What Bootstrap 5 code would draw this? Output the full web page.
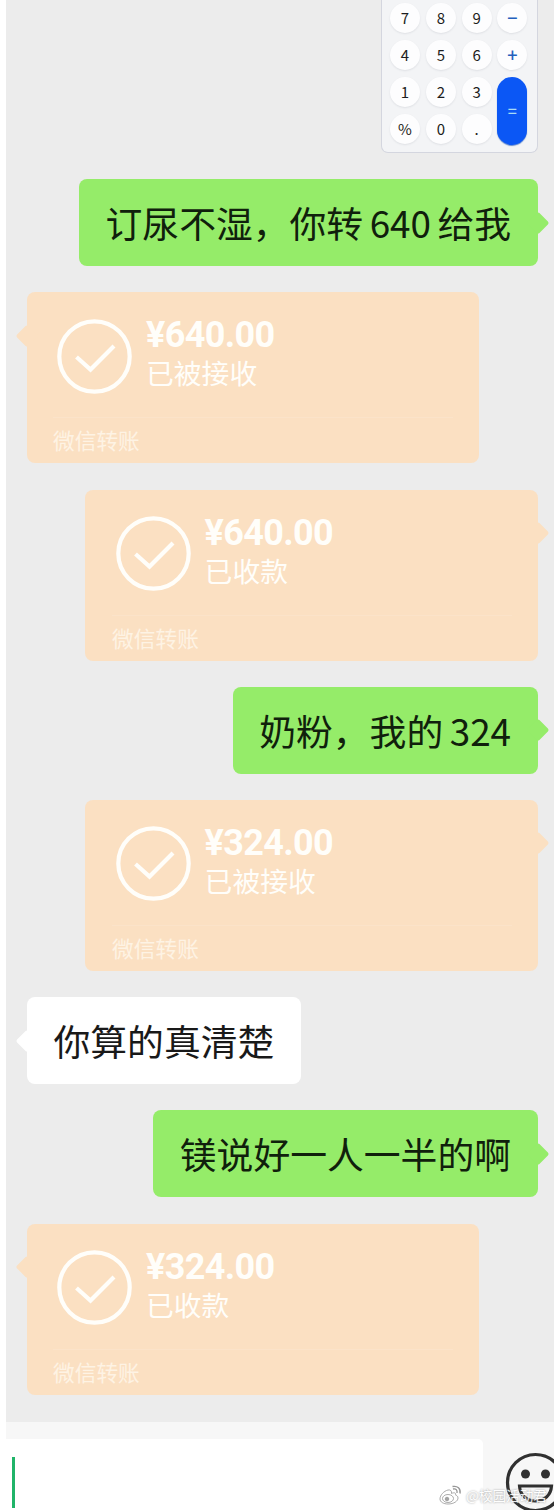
<!DOCTYPE html>
<html lang="zh-CN">
<head>
<meta charset="utf-8">
<meta name="viewport" content="width=device-width, initial-scale=1">
<title>聊天</title>
<link href="https://cdn.jsdelivr.net/npm/bootstrap@5.3.0/dist/css/bootstrap.min.css" rel="stylesheet">
<style>
  body { font-family: "Noto Sans CJK SC", sans-serif; background: #fff; }
  .phone { width: 554px; height: 1510px; padding-left: 6px; }
  .chat { height: 1422px; background: #ececec; padding: 0 16.5px 0 21px; }
  .thread { gap: 26.2px; }

  .calc { width: 157px; height: 153px; padding: 3.5px 8.5px 0; background: #f3f4f6; border: 1px solid #d4d6df; border-top: 0; border-radius: 0 0 7px 7px; }
  .keys { display: grid; grid-template-columns: repeat(4, 30px); grid-auto-rows: 30px; gap: 7px 5.8px; font: 400 15px/29px "Noto Sans CJK SC", sans-serif; color: #1d1e21; text-align: center; margin-top: -.6px; }
  .key { border-radius: 50%; background: #fdfdfe; box-shadow: 0 1px 2px rgba(60, 70, 90, .11); }
  .key-op { color: #2460bd; font-size: 18px; font-weight: 500; line-height: 28px; }
  .key-eq { grid-row: span 2; height: 68px; line-height: 66px; border-radius: 15px; background: #0b57f5; color: #a9dcf5; font-size: 16px; font-weight: 500; box-shadow: 0 1px 1px #5d87cf; }

  .bubble, .transfer { border-radius: 8px; background: var(--fill); }
  .bubble { height: 87px; padding: 0 26.5px; font-size: 36.8px; line-height: 86px; color: #10200c; white-space: nowrap; }
  .bubble::after, .transfer::after { content: ""; position: absolute; top: 35.5px; width: 16px; height: 16px; border-radius: 2px; background: var(--fill); transform: rotate(45deg); }
  .sent { align-self: flex-end; }
  .sent::after { right: -8px; }
  .received { align-self: flex-start; }
  .received::after { left: -8px; }
  .green { --fill: #95ec69; }
  .white { --fill: #fff; color: #191919; }
  .num { margin: 0 6.5px; }

  .transfer { --fill: #fbe0c2; width: 452.4px; height: 171px; color: #fffefa; }
  .transfer-top { height: 125px; padding: 26.2px 0 0 30px; gap: 13px; }
  .sent .transfer-top { padding-left: 30.5px; }
  .amount { font: 700 36px/36px Roboto, sans-serif; letter-spacing: -.65px; margin-top: -1.2px; }
  .state { font-size: 27.8px; line-height: 38px; }
  .source { margin: 0 26px; height: 45px; border-top: 1px solid #fbe3c9; font-size: 21.7px; line-height: 43px; color: #fef3e4; }
  .sent .source { margin-left: 27px; }

  .composer { height: 88px; background: #f7f7f7; padding-top: 17px; }
  .entry { width: 477px; background: #fff; border-top-right-radius: 5px; padding: 18px 0 0 6px; }
  .caret { width: 3px; height: 51px; background: #20b469; }
  .smile { right: -11px; top: 30px; }
  .watermark { left: 433px; top: 61px; font-size: 13.6px; line-height: 24px; color: #fff; text-shadow: 0 0 2px #888; white-space: nowrap; opacity: .9; }
</style>
</head>
<body>
<div class="phone overflow-hidden">
  <main class="chat">
    <div class="thread d-flex flex-column">
      <div class="calc sent">
        <div class="keys">
          <span class="key">7</span><span class="key">8</span><span class="key">9</span><span class="key key-op">−</span>
          <span class="key">4</span><span class="key">5</span><span class="key">6</span><span class="key key-op">+</span>
          <span class="key">1</span><span class="key">2</span><span class="key">3</span><span class="key-eq">=</span>
          <span class="key">%</span><span class="key">0</span><span class="key">.</span>
        </div>
      </div>

      <div class="bubble green sent position-relative">订尿不湿，你转<span class="num">640</span>给我</div>

      <div class="transfer received position-relative">
        <div class="transfer-top d-flex">
          <svg width="76" height="76" viewBox="0 0 76 76" fill="none" stroke="#fffefa" stroke-width="4.2"><circle cx="37.5" cy="37.5" r="35.2"/><path d="M19.500 38 33.500 50.500 57 27"/></svg>
          <div class="text-nowrap"><div class="amount">¥640.00</div><div class="state">已被接收</div></div>
        </div>
        <div class="source">微信转账</div>
      </div>

      <div class="transfer sent position-relative">
        <div class="transfer-top d-flex">
          <svg width="76" height="76" viewBox="0 0 76 76" fill="none" stroke="#fffefa" stroke-width="4.2"><circle cx="37.5" cy="37.5" r="35.2"/><path d="M19.500 38 33.500 50.500 57 27"/></svg>
          <div class="text-nowrap"><div class="amount">¥640.00</div><div class="state">已收款</div></div>
        </div>
        <div class="source">微信转账</div>
      </div>

      <div class="bubble green sent position-relative">奶粉，我的<span class="num me-0">324</span></div>

      <div class="transfer sent position-relative">
        <div class="transfer-top d-flex">
          <svg width="76" height="76" viewBox="0 0 76 76" fill="none" stroke="#fffefa" stroke-width="4.2"><circle cx="37.5" cy="37.5" r="35.2"/><path d="M19.500 38 33.500 50.500 57 27"/></svg>
          <div class="text-nowrap"><div class="amount">¥324.00</div><div class="state">已被接收</div></div>
        </div>
        <div class="source">微信转账</div>
      </div>

      <div class="bubble white received position-relative">你算的真清楚</div>

      <div class="bubble green sent position-relative">镁说好一人一半的啊</div>

      <div class="transfer received position-relative">
        <div class="transfer-top d-flex">
          <svg width="76" height="76" viewBox="0 0 76 76" fill="none" stroke="#fffefa" stroke-width="4.2"><circle cx="37.5" cy="37.5" r="35.2"/><path d="M19.500 38 33.500 50.500 57 27"/></svg>
          <div class="text-nowrap"><div class="amount">¥324.00</div><div class="state">已收款</div></div>
        </div>
        <div class="source">微信转账</div>
      </div>
    </div>
  </main>

  <footer class="composer d-flex position-relative overflow-hidden">
    <div class="entry"><div class="caret"></div></div>
    <svg class="smile position-absolute" width="60" height="60" viewBox="0 0 60 60"><circle cx="30.5" cy="30.5" r="28" fill="none" stroke="#303030" stroke-width="3.2"/><circle cx="20.5" cy="22" r="4.5" fill="#303030"/><circle cx="40.5" cy="22" r="4.5" fill="#303030"/><path d="M14.5 34H46.5C46 43 39.5 49 30.5 49S15 43 14.5 34Z" fill="#f7f7f7" stroke="#303030" stroke-width="3.2"/></svg>
    <div class="watermark position-absolute d-flex align-items-center">
      <svg class="me-1" width="23" height="21" viewBox="0 0 23 21" fill="#fff" stroke="#8b8b8b" stroke-width=".8"><path d="M9 5C5 6 1 10 1 14c0 3 3.500 5 8 5 6 0 10-3 10-6 0-2-1.500-2.500-2.500-3 .7-2-1-3-4-1.500C13 6 11.500 4.500 9 5Z"/><ellipse cx="9" cy="13.500" rx="5.500" ry="4"/><circle cx="8" cy="14" r="1.800" fill="#9a9a9a"/><path d="M14 4c3-.7 4.500 1 4 4M13.500 1.500c5-1 8.500 2 7.500 7" fill="none" stroke-width="1.300"/></svg>
      <span>@校园活动君</span>
    </div>
  </footer>
</div>
<script src="https://cdn.jsdelivr.net/npm/bootstrap@5.3.0/dist/js/bootstrap.bundle.min.js"></script>
</body>
</html>
